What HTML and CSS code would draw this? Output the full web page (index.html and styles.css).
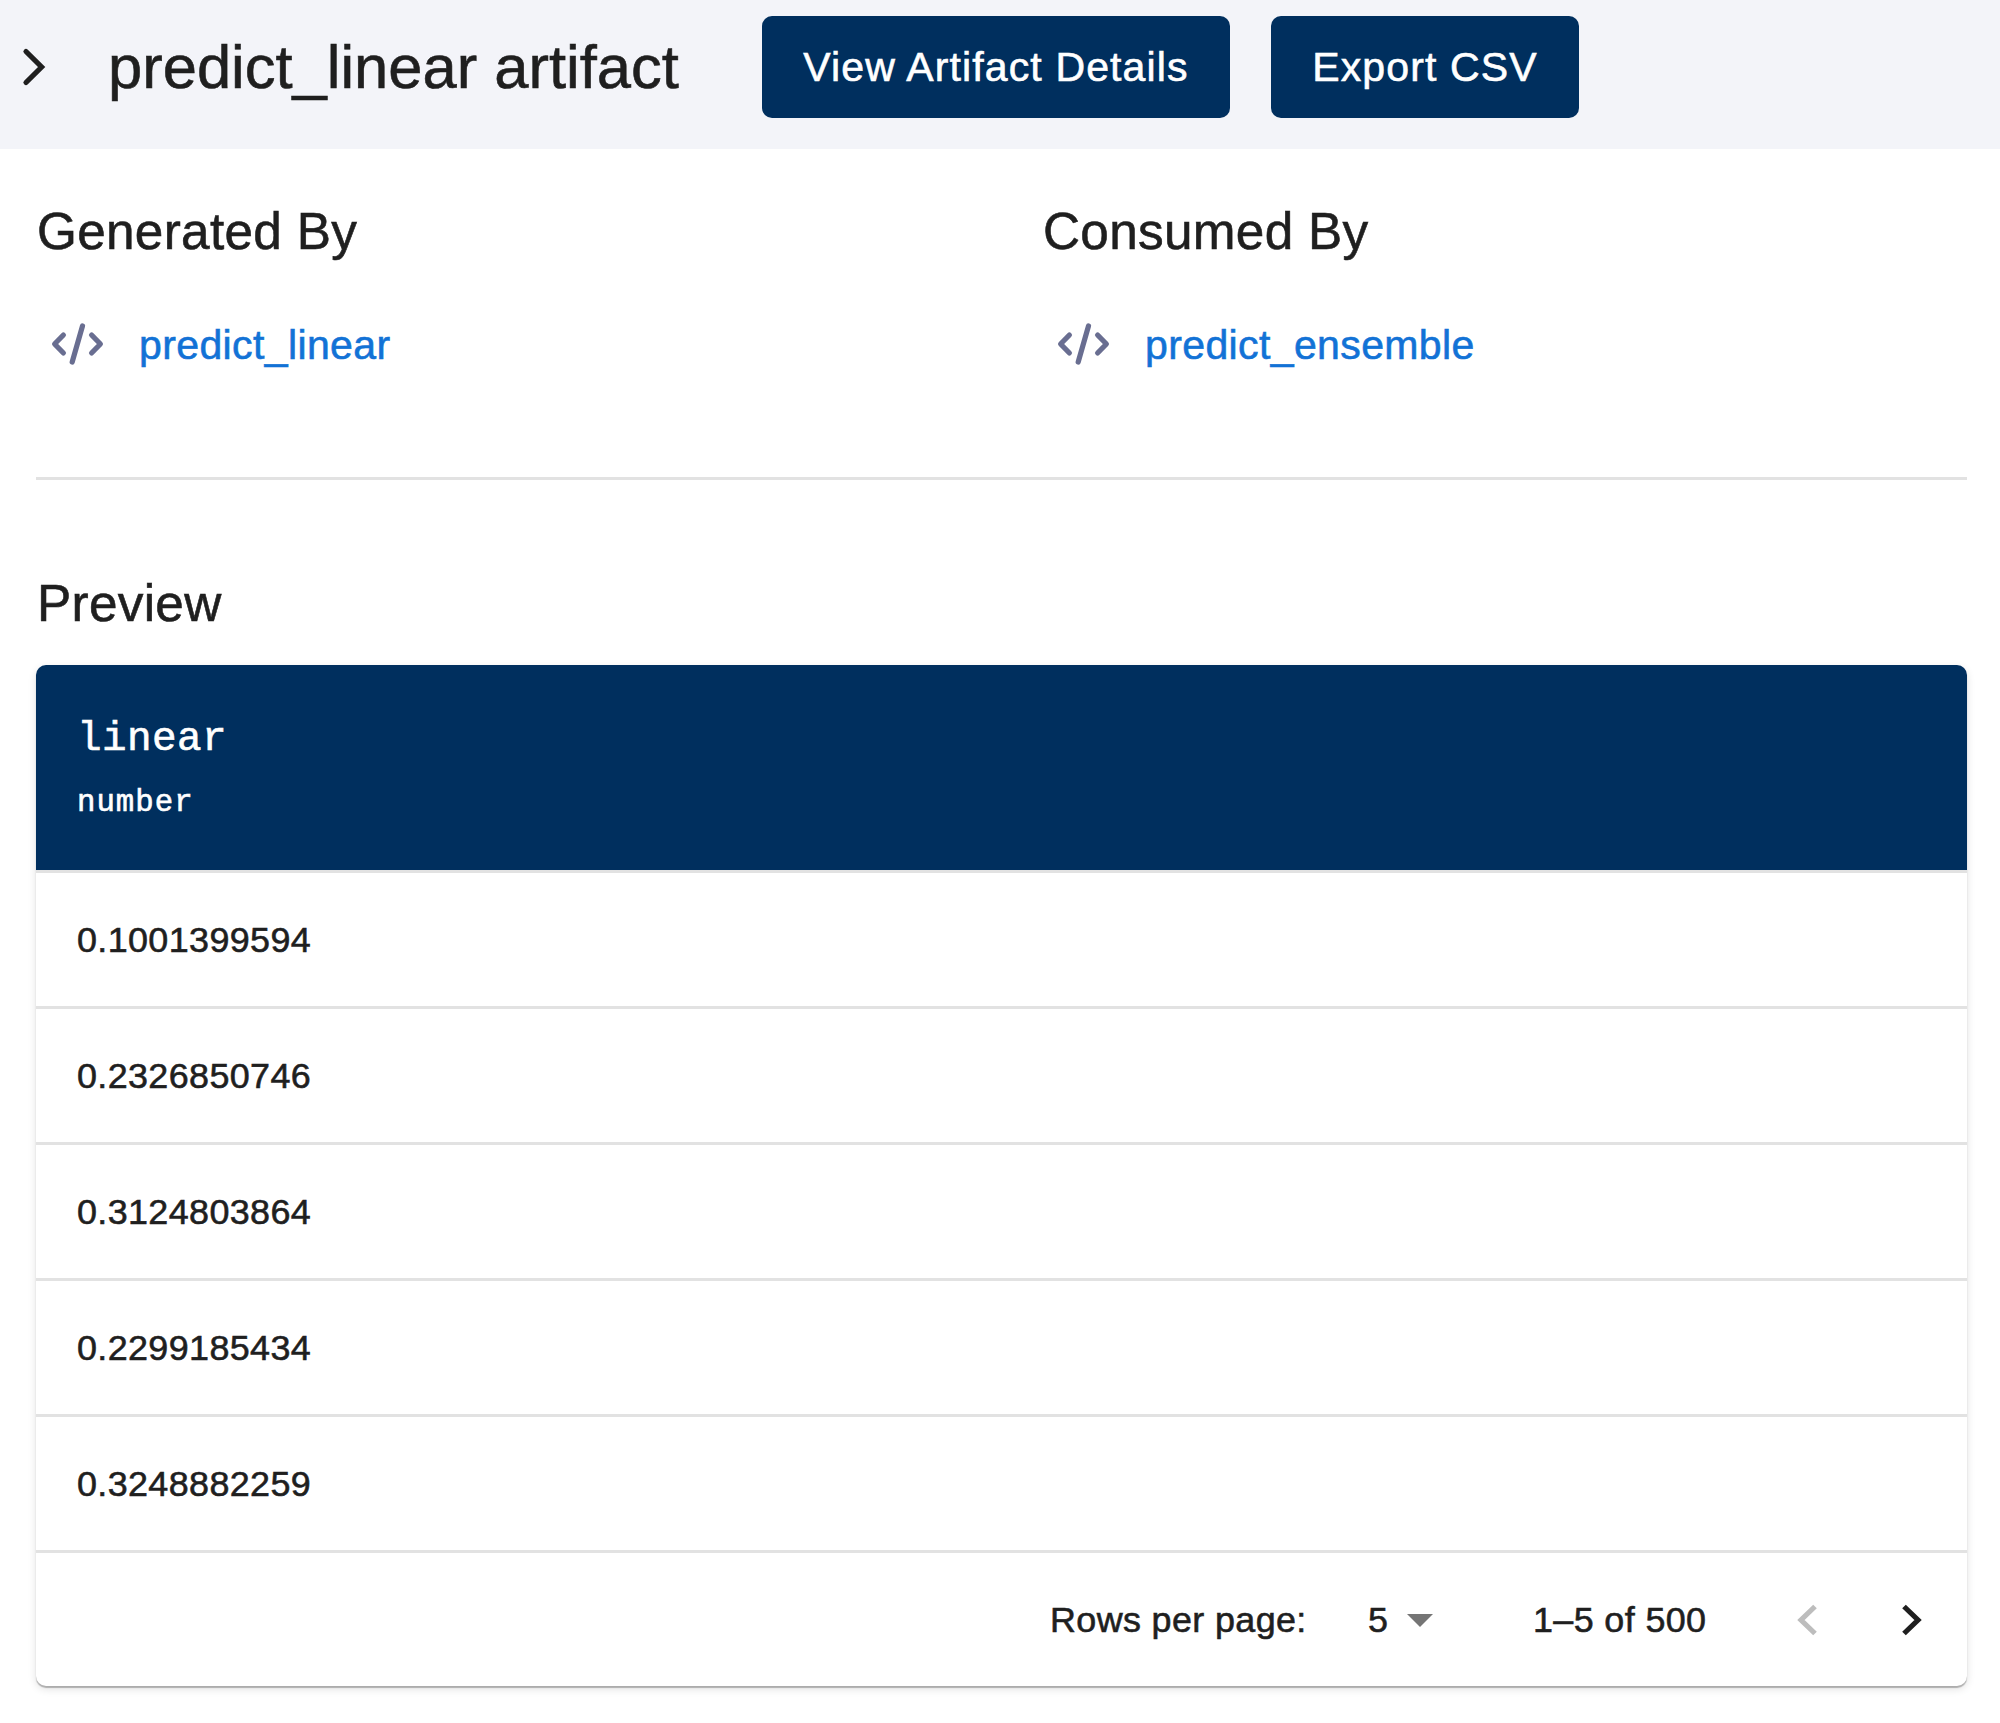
FILE: index.html
```html
<!DOCTYPE html>
<html lang="en">
<head>
<meta charset="utf-8">
<title>predict_linear artifact</title>
<link rel="stylesheet" href="styles.css">
</head>
<body>
<header class="header">
  <svg class="header-chevron" viewBox="0 0 30 44"><path d="M8 6.5 23.6 22 8 37.5"/></svg>
  <h1 class="title">predict_linear artifact</h1>
  <button class="button button-details">View Artifact Details</button>
  <button class="button button-export">Export CSV</button>
</header>
<main class="content">
  <section class="relations">
    <div class="relation">
      <h2 class="heading">Generated By</h2>
      <a class="operator">
        <svg class="code-icon" viewBox="0 0 56 46"><path d="M13.4 14 4.6 23l8.8 9M32.5 5 22.2 41M41.6 14l8.8 9-8.8 9"/></svg>
        <span>predict_linear</span>
      </a>
    </div>
    <div class="relation">
      <h2 class="heading">Consumed By</h2>
      <a class="operator">
        <svg class="code-icon" viewBox="0 0 56 46"><path d="M13.4 14 4.6 23l8.8 9M32.5 5 22.2 41M41.6 14l8.8 9-8.8 9"/></svg>
        <span>predict_ensemble</span>
      </a>
    </div>
  </section>
  <hr class="divider">
  <h2 class="heading preview-heading">Preview</h2>
  <div class="card">
    <div class="table-head">
      <div class="column-name">linear</div>
      <div class="column-type">number</div>
    </div>
    <div class="row">0.1001399594</div>
    <div class="row">0.2326850746</div>
    <div class="row">0.3124803864</div>
    <div class="row">0.2299185434</div>
    <div class="row">0.3248882259</div>
    <div class="pagination">
      <span class="rows-label">Rows per page:</span>
      <span class="rows-select">5
        <svg class="caret" viewBox="0 0 26 13"><path d="M0 0h26L13 13z"/></svg>
      </span>
      <span class="range">1–5 of 500</span>
      <svg class="page-arrow page-arrow-disabled" viewBox="0 0 24 36"><path d="M19 4.5 5 18l14 13.5"/></svg>
      <svg class="page-arrow page-arrow-next" viewBox="0 0 24 36"><path d="M5 4.5 19 18 5 31.5"/></svg>
    </div>
  </div>
</main>
</body>
</html>
```
FILE: styles.css
```css
* { box-sizing: border-box; }
body {
  min-height: 1723px;
  margin: 0;
  background: #fff;
  color: #1f1f1f;
  font-family: "Liberation Sans", Arial, sans-serif;
  -webkit-text-stroke: 0.6px currentColor;
}
.header {
  display: flex;
  align-items: center;
  height: 149px;
  padding: 16px 0 31px 18px;
  background: #f3f4f9;
}
.header-chevron {
  width: 30px;
  height: 44px;
  fill: none;
  stroke: #1f1f1f;
  stroke-width: 5.2;
  stroke-linecap: round;
}
.title {
  width: 654px;
  margin: 0 0 0 60px;
  font-size: 61.5px;
  font-weight: 400;
  line-height: 82px;
  white-space: nowrap;
}
.button {
  height: 102px;
  padding: 1px 0 0;
  border: 0;
  border-radius: 10px;
  background: #002f5e;
  color: #fff;
  font: 400 41px "Liberation Sans", Arial, sans-serif;
  letter-spacing: 1.13px;
  -webkit-text-stroke: 0.6px currentColor;
}
.button-details { width: 468px; }
.button-export { width: 308px; margin-left: 41px; }
.content { padding: 42px 33px 0 36px; }
.relations {
  display: grid;
  grid-template-columns: 1006px 1fr;
  height: 286px;
}
.heading {
  margin: 0;
  padding-left: 1px;
  font-size: 51.3px;
  font-weight: 400;
  line-height: 82px;
  letter-spacing: 0.3px;
}
.operator {
  display: flex;
  align-items: center;
  gap: 33px;
  height: 62px;
  margin-top: 40px;
  padding-left: 14px;
  color: #1272d6;
  font-size: 41px;
  letter-spacing: 0.38px;
}
.operator span { padding-top: 2px; }
.code-icon {
  width: 56px;
  height: 46px;
  fill: none;
  stroke: #696e91;
  stroke-width: 5.2;
  stroke-linecap: round;
  stroke-linejoin: round;
}
.divider {
  height: 3px;
  margin: 0;
  border: 0;
  background: #e2e2e2;
}
.preview-heading { padding: 83px 0 20px 1px; }
.card {
  height: 1021px;
  border-radius: 10px;
  background: #fff;
  box-shadow: 0 2px 1px rgba(0, 0, 0, .26), 0 3px 8px rgba(0, 0, 0, .12);
}
.table-head {
  height: 205px;
  padding: 41px 41px 0;
  border-radius: 10px 10px 0 0;
  background: #002f5e;
  color: #fff;
  font-family: "Liberation Mono", "Courier New", monospace;
}
.column-name {
  font-size: 41px;
  line-height: 66px;
  letter-spacing: 0.38px;
}
.column-type {
  font-size: 30.7px;
  line-height: 62px;
  letter-spacing: 1.02px;
}
.row {
  display: flex;
  align-items: center;
  height: 136px;
  padding: 1px 0 0 41px;
  border-top: 3px solid #e2e2e2;
  font-size: 35.9px;
  letter-spacing: 0.38px;
}
.pagination {
  display: flex;
  align-items: center;
  height: 136px;
  padding-left: 1014px;
  border-top: 3px solid #e2e2e2;
  font-size: 35.9px;
  letter-spacing: 0.38px;
}
.rows-label { width: 318px; padding-top: 2px; }
.rows-select {
  display: flex;
  align-items: center;
  gap: 19px;
  width: 165px;
  padding-top: 2px;
}
.caret {
  width: 26px;
  height: 13px;
  fill: #757575;
}
.range { width: 263px; padding-top: 2px; }
.page-arrow {
  width: 24px;
  height: 36px;
  fill: none;
  stroke: #1f1f1f;
  stroke-width: 5.2;
}
.page-arrow-disabled { stroke: #bdbdbd; }
.page-arrow-next { margin-left: 79px; }
```
